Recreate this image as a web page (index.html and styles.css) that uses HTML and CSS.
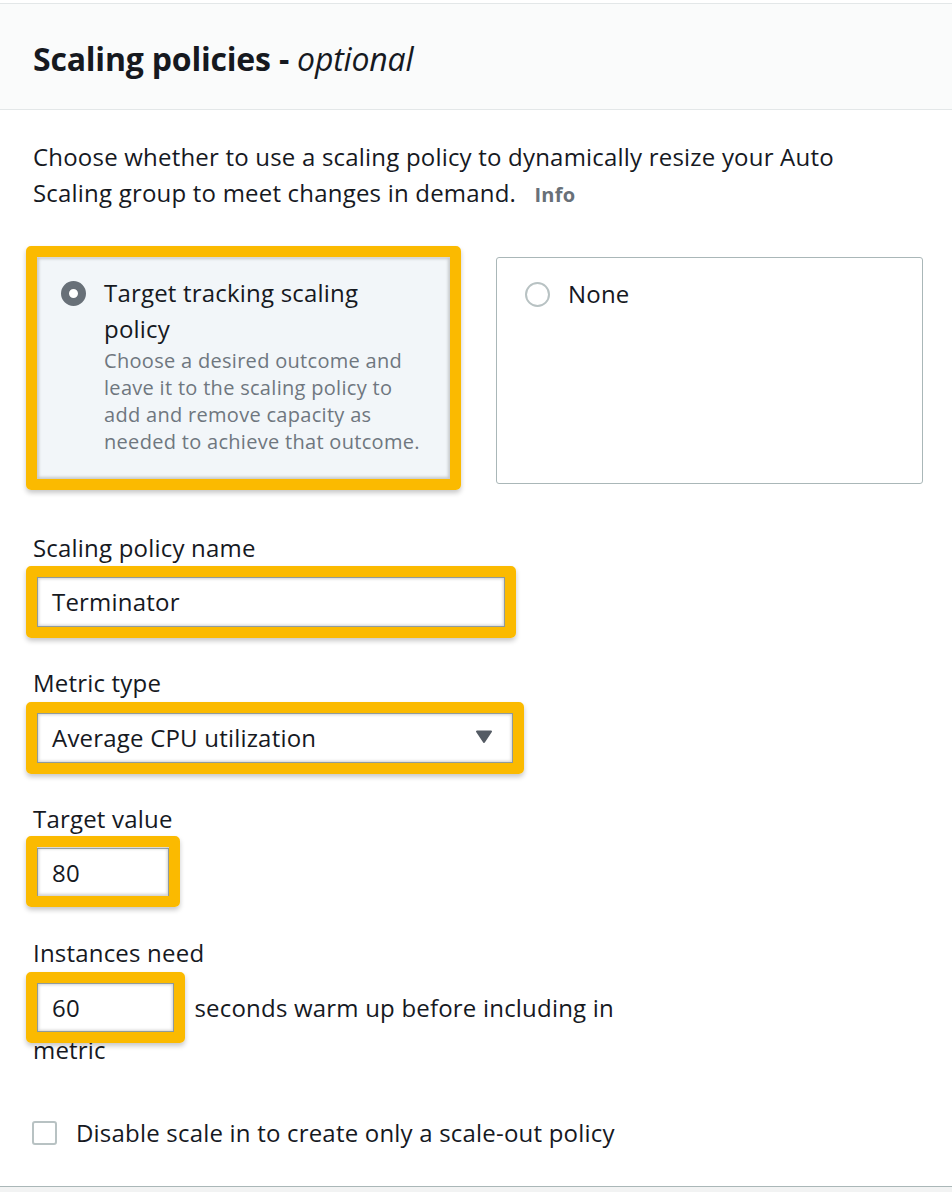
FILE: index.html
```html
<!DOCTYPE html>
<html lang="en">
<head>
<meta charset="utf-8">
<title>Scaling policies</title>
<link rel="stylesheet" href="styles.css">
</head>
<body>
<div class="panel">
  <div class="panel-header">
    <h2 class="panel-title">Scaling policies - <i class="optional">optional</i></h2>
  </div>
  <div class="panel-body">
    <p class="intro">Choose whether to use a scaling policy to dynamically resize your Auto Scaling group to meet changes in demand. <a class="info">Info</a></p>

    <div class="tiles">
      <div class="tile tile-selected hl">
        <span class="radio radio-on"></span>
        <div class="tile-text">
          <div class="tile-title">Target tracking scaling policy</div>
          <div class="tile-desc">Choose a desired outcome and leave it to the scaling policy to add and remove capacity as needed to achieve that outcome.</div>
        </div>
      </div>
      <div class="tile tile-plain">
        <span class="radio"></span>
        <div class="tile-text">
          <div class="tile-title">None</div>
        </div>
      </div>
    </div>

    <div class="field-label label-first">Scaling policy name</div>
    <div class="input input-name hl">Terminator</div>

    <div class="field-label">Metric type</div>
    <div class="input select hl">
      <span>Average CPU utilization</span>
      <svg class="caret" width="18" height="14" viewBox="0 0 18 14"><path d="M2 1.5 H16 L9 12 Z" fill="#545b64" stroke="#545b64" stroke-width="2" stroke-linejoin="round"/></svg>
    </div>

    <div class="field-label">Target value</div>
    <div class="input input-small hl">80</div>

    <div class="field-label">Instances need</div>
    <p class="warmup"><span class="input input-inline hl">60</span> seconds warm up before including in metric</p>

    <div class="check-row">
      <span class="checkbox"></span>
      <span class="check-label">Disable scale in to create only a scale-out policy</span>
    </div>
  </div>
</div>
<div class="page-foot"></div>
</body>
</html>
```

FILE: styles.css
```css
* {
  box-sizing: border-box;
}

html,
body {
  margin: 0;
  background: #ffffff;
}

body {
  padding-top: 3px;
  font-family: "Open Sans", "Noto Sans", sans-serif;
  color: #16191f;
  font-size: 24px;
  line-height: 36px;
  letter-spacing: 0.2px;
}

.panel {
  height: 1184px;
  background: #ffffff;
  border-top: 1px solid #e3e7e8;
  border-bottom: 1px solid #aab7b8;
  overflow: hidden;
}

.page-foot {
  height: 6px;
  background: #f2f3f3;
}

.panel-header {
  height: 106px;
  background: #fafbfb;
  border-bottom: 1px solid #e3e7e8;
  padding: 33px 33px 0;
}

.panel-title {
  margin: 0;
  font-size: 32px;
  line-height: 44px;
  font-weight: 700;
  letter-spacing: -0.2px;
}

.optional {
  font-weight: 400;
  font-style: italic;
}

.panel-body {
  padding: 0 29px 0 33px;
}

.intro {
  margin: 29px 0 0;
  max-width: 850px;
}

.info {
  margin-left: 12px;
  font-size: 20px;
  font-weight: 700;
  color: #687078;
  letter-spacing: 0.2px;
}

.tiles {
  display: flex;
  align-items: flex-start;
  margin-top: 44px;
}

.tile {
  display: flex;
  align-items: flex-start;
  gap: 18px;
}

.tile-selected {
  margin-left: 4px;
  margin-top: 1px;
  width: 413px;
  height: 221px;
  padding: 17px 16px 0 24px;
  background: #f2f6f9;
}

.tile-plain {
  margin-left: 46px;
  width: 427px;
  height: 227px;
  padding: 18px 20px 0 28px;
  border: 1px solid #aab7b8;
  border-radius: 3px;
}

.radio {
  flex: none;
  width: 25px;
  height: 25px;
  margin-top: 6px;
  border-radius: 50%;
  border: 2px solid #b8c2c3;
  background: #ffffff;
}

.radio-on {
  border: 8px solid #687078;
}

.tile-text {
  width: 326px;
}

.tile-title {
  max-width: 300px;
}

.tile-desc {
  font-size: 20px;
  line-height: 27px;
  color: #6f777f;
  letter-spacing: 0.3px;
}

.field-label {
  margin-top: 38px;
}

.label-first {
  margin-top: 46px;
}

.input {
  position: relative;
  margin-left: 4px;
  margin-top: 11px;
  height: 50px;
  padding: 0 15px;
  line-height: 50px;
  background: #ffffff;
  box-shadow: inset 0 0 0 1px #aab7b8;
}

.input-name {
  width: 468px;
}

.select {
  width: 476px;
  display: flex;
  align-items: center;
  justify-content: space-between;
  padding-right: 20px;
}

.caret {
  display: block;
  margin-top: -2px;
}

.field-label + .select {
  margin-top: 12px;
}

.input-small {
  width: 132px;
  height: 49px;
  line-height: 49px;
}

.warmup {
  margin: 12px 0 0;
  max-width: 600px;
}

.input-inline {
  display: inline-block;
  vertical-align: baseline;
  margin: 0 14px 0 4px;
  width: 137px;
  height: 49px;
  padding-top: 1px;
  line-height: 48px;
}

.check-row {
  display: flex;
  align-items: flex-start;
  gap: 19px;
  margin-top: 47px;
}

.checkbox {
  flex: none;
  width: 25px;
  height: 24px;
  margin: 6px 0 0 -1px;
  border: 2px solid #b8c2c3;
  border-radius: 3px;
  background: #ffffff;
}

/* yellow annotation drawn over highlighted controls */
.hl {
  position: relative;
}

.hl::after {
  content: "";
  position: absolute;
  top: -11px;
  left: -11px;
  right: -11px;
  bottom: -11px;
  border: 11px solid #fbba00;
  border-radius: 5px;
  box-shadow: 0 3px 5px rgba(0, 0, 0, 0.22), inset 0 0 3px 2px rgba(0, 0, 0, 0.18);
  pointer-events: none;
}

.tile-selected.hl::after {
  top: -12px;
}

.input-small.hl::after {
  top: -12px;
  bottom: -10px;
}
```
